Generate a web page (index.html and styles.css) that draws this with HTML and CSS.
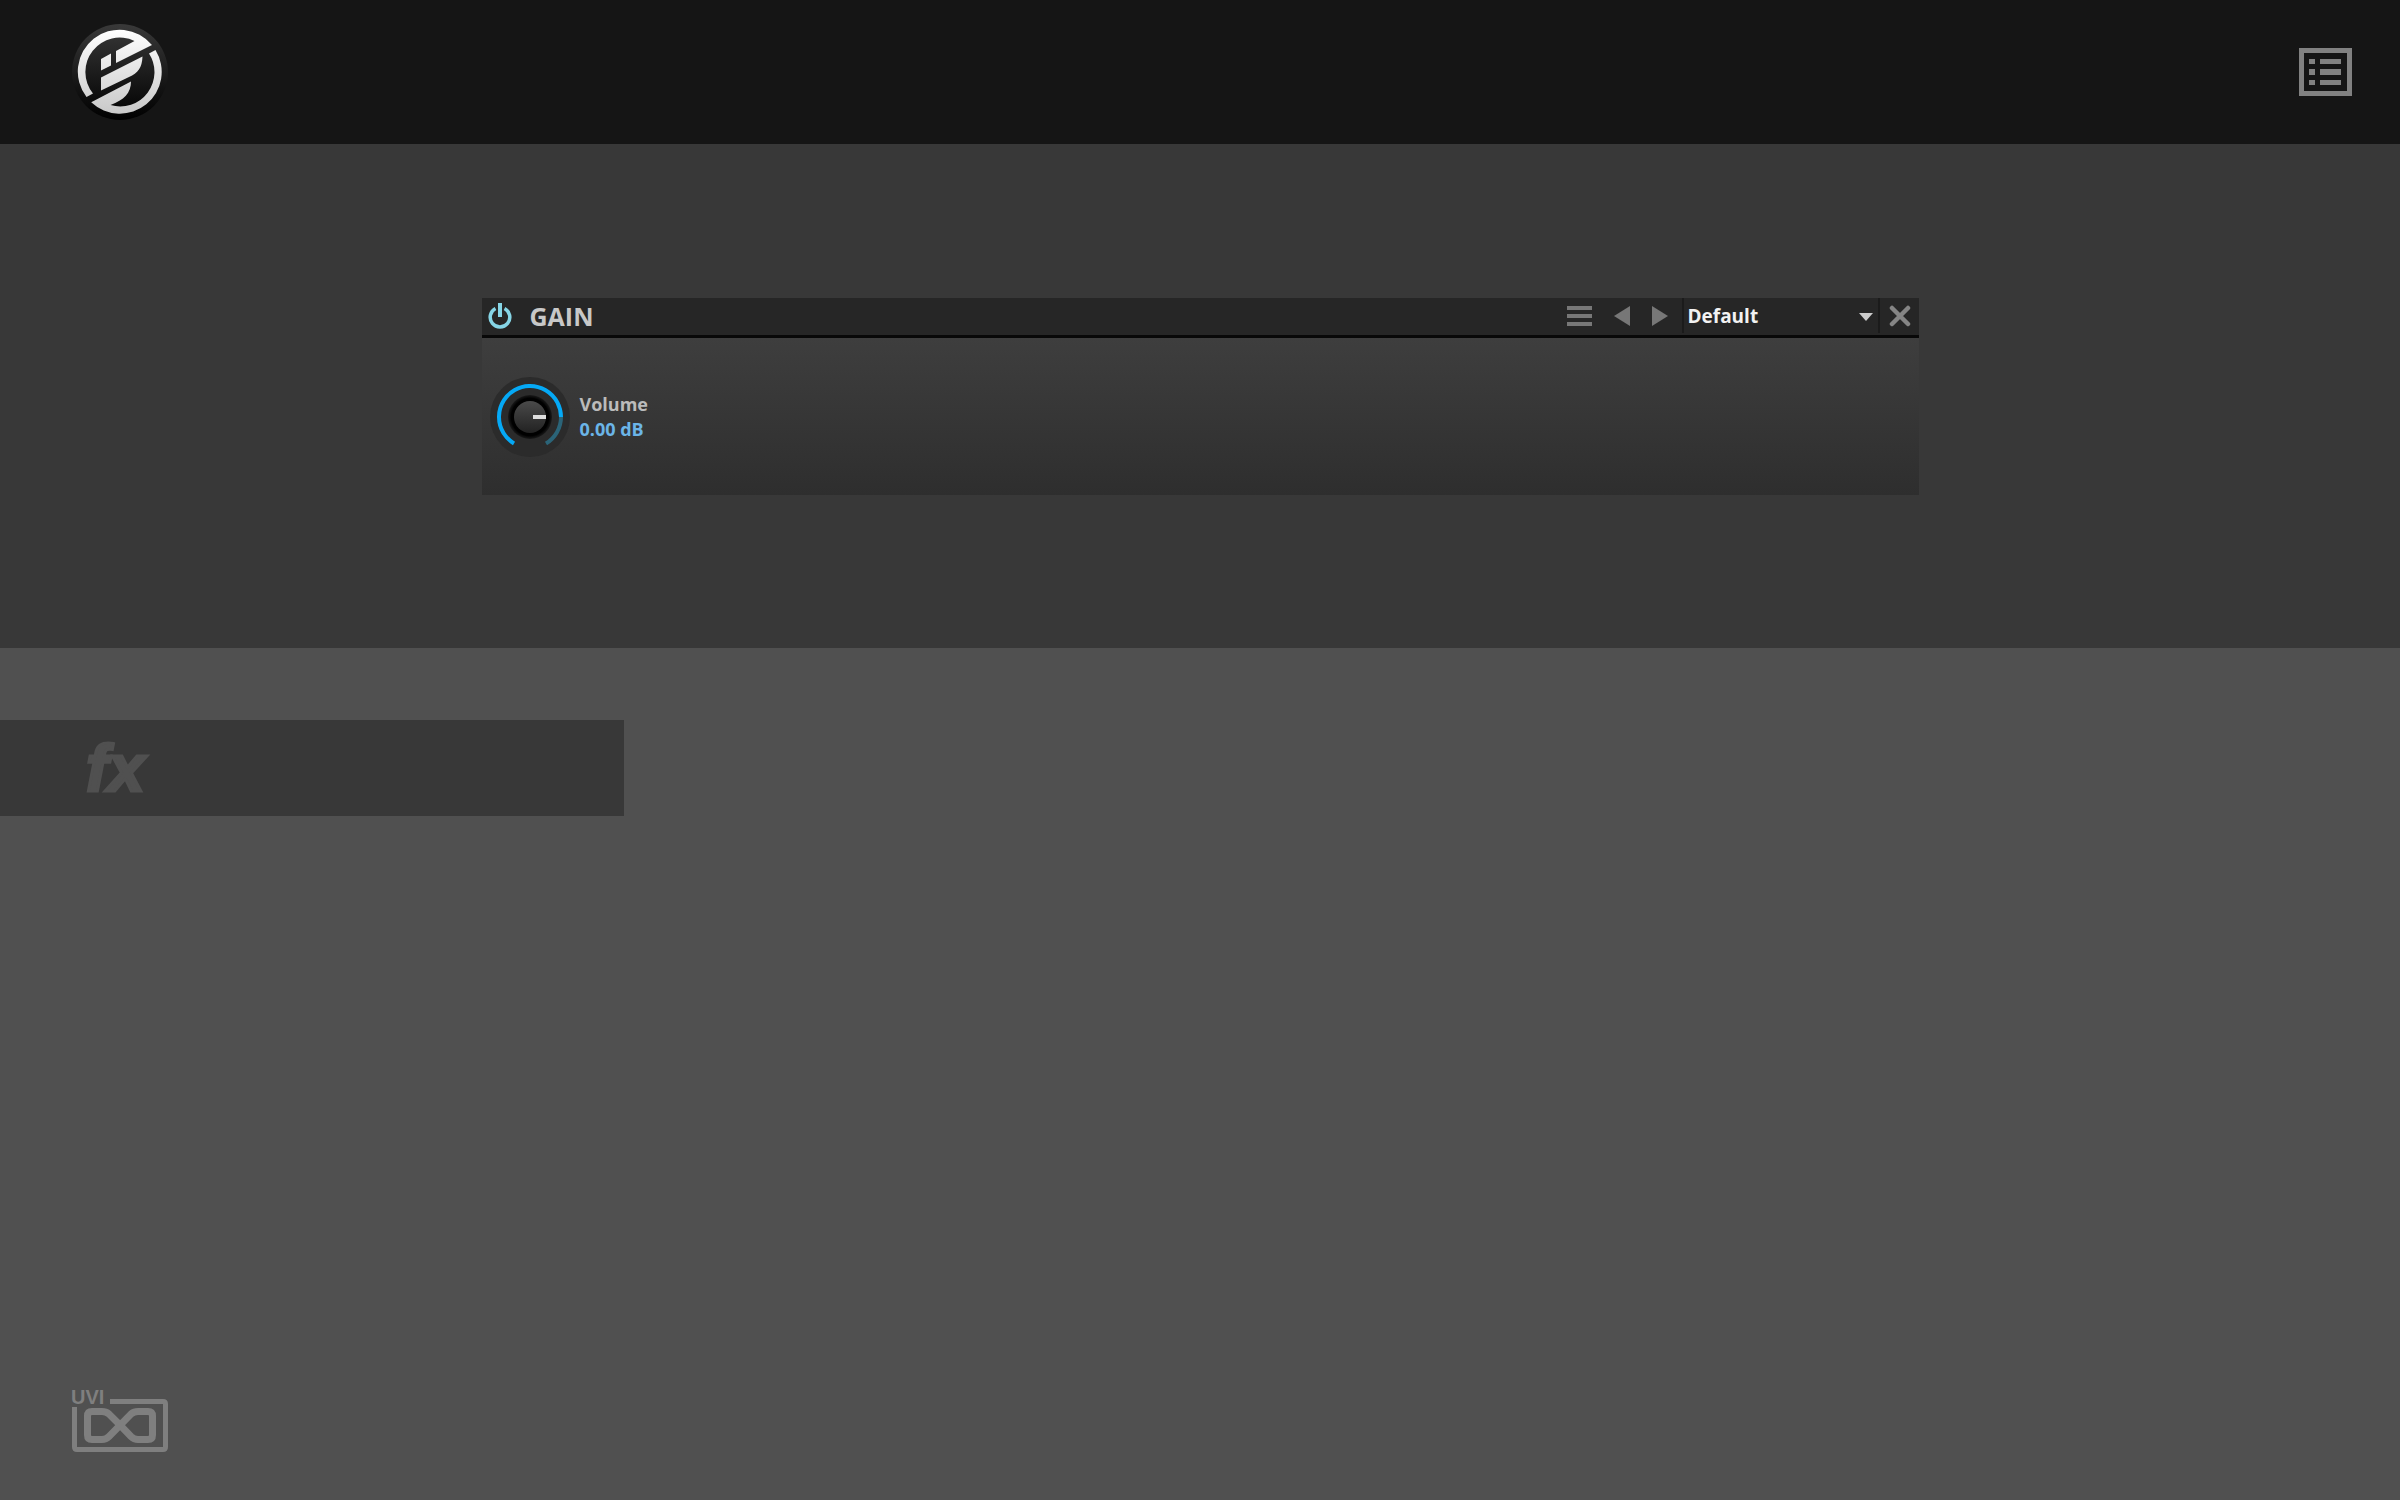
FILE: index.html
```html
<!DOCTYPE html>
<html lang="en">
<head>
	<meta charset="UTF-8">
	<title>Gain</title>
	<link rel="stylesheet" href="styles.css">
</head>
<body>
	<header class="topbar">
		<a href="#" class="logo" aria-label="Falcon">
			<svg width="96" height="96" viewBox="0 0 96 96">
				<defs>
					<linearGradient id="disc" x1="0" y1="0" x2="0" y2="1">
						<stop offset="0" stop-color="#393939"/>
						<stop offset="1" stop-color="#000"/>
					</linearGradient>
					<linearGradient id="mark" gradientUnits="userSpaceOnUse" x1="0" y1="6" x2="0" y2="90">
						<stop offset="0" stop-color="#fff"/>
						<stop offset="1" stop-color="#c8c8c8"/>
					</linearGradient>
				</defs>
				<circle cx="48" cy="48" r="48" fill="url(#disc)"/>
				<g fill="url(#mark)">
					<path d="M14.500 73 A41.820 41.820 0 0 1 80 21 L44 39 V27 L62.500 17 A34.300 34.300 0 0 0 21 69.500 Z"/>
					<path d="M83.500 26 A41.800 41.800 0 0 1 19.200 78.300 L59 57.500 C59 69 52 76 38.500 81 A34.300 34.300 0 0 0 77 29.500 Z"/>
					<path d="M29 35 L39 29.500 V41.500 L29 46.500 Z"/>
					<path d="M29 53.500 L70.500 32.500 C70 44 66 49 57 53 L29 66.500 Z"/>
				</g>
			</svg>
		</a>
		<button class="menu" aria-label="Contents">
			<svg width="53" height="48" viewBox="0 0 53 48" fill="#818181">
				<path fill-rule="evenodd" d="M0 0H53V48H0Z M5 5V43H48V5Z"/>
				<path d="M10 11h6v5h-6z M21 11h21v5h-21z M10 21h6v6h-6z M21 21h21v6h-21z M10 32h6v5h-6z M21 32h21v5h-21z"/>
			</svg>
		</button>
	</header>

	<section class="stage">
		<div class="module">
			<div class="module-head">
				<button class="power" aria-label="Power">
					<svg width="24" height="26" viewBox="0 0 24 26" fill="none" stroke="#86d5e6">
						<path d="M7.500 5.500 A9.800 9.800 0 1 0 16.500 5.500" stroke-width="3.500"/>
						<path d="M12 0V14" stroke-width="4"/>
					</svg>
				</button>
				<h1>GAIN</h1>
				<div class="tools">
					<button aria-label="Menu">
						<svg width="25" height="22" viewBox="0 0 25 22" fill="#777"><path d="M0 1h25v4h-25z M0 9h25v4h-25z M0 17h25v4h-25z"/></svg>
					</button>
					<button aria-label="Previous preset">
						<svg width="16" height="20" viewBox="0 0 16 20" fill="#777"><path d="M16 0V20L0 10Z"/></svg>
					</button>
					<button aria-label="Next preset">
						<svg width="16" height="20" viewBox="0 0 16 20" fill="#777"><path d="M0 0V20L16 10Z"/></svg>
					</button>
				</div>
				<div class="preset">
					<select aria-label="Preset">
						<option>Default</option>
					</select>
					<svg class="caret" width="14" height="8" viewBox="0 0 14 8" fill="#ccc"><path d="M0 0H14L7 8Z"/></svg>
				</div>
				<button class="close" aria-label="Close">
					<svg width="22" height="22" viewBox="0 0 22 22" stroke="#858585" stroke-width="4.500" stroke-linecap="round"><path d="M3 3L19 19M19 3L3 19"/></svg>
				</button>
			</div>
			<div class="module-body">
				<div class="knob">
					<svg width="80" height="80" viewBox="0 0 80 80">
						<defs>
							<linearGradient id="cap" x1="0" y1="0" x2="0" y2="1">
								<stop offset="0" stop-color="#4a4a4a"/>
								<stop offset="1" stop-color="#222"/>
							</linearGradient>
							<radialGradient id="shade">
								<stop offset="0.850" stop-color="#000"/>
								<stop offset="1" stop-color="#1a1a1a"/>
							</radialGradient>
						</defs>
						<circle cx="40" cy="40" r="40" fill="#2b2b2b"/>
						<path d="M71 40 A31 31 0 0 1 56 66.500" fill="none" stroke="#2b6478" stroke-width="4"/>
						<path d="M24 66.500 A31 31 0 1 1 71 40" fill="none" stroke="#05a9f6" stroke-width="4"/>
						<circle cx="40" cy="40" r="22" fill="url(#shade)"/>
						<circle cx="40" cy="40" r="16" fill="url(#cap)"/>
						<path d="M43 40H56" stroke="#ddd" stroke-width="4"/>
					</svg>
					<input type="range" id="volume" min="-60" max="12" value="0">
				</div>
				<div class="readout">
					<label for="volume">Volume</label>
					<output for="volume">0.00 dB</output>
				</div>
			</div>
		</div>
	</section>

	<main>
		<button class="fx">fx</button>
	</main>

	<footer>
		<a href="#" aria-label="UVI">
			<svg class="uvi" width="96" height="62" viewBox="0 0 96 62">
				<text x="-1" y="14">UVI</text>
				<g fill="none" stroke="#7f7f7f">
					<path d="M38 11.500H91Q93.500 11.500 93.500 14V57Q93.500 59.500 91 59.500H5Q2.500 59.500 2.500 57V17" stroke-width="5"/>
					<path d="M48 35 L37 24 Q34 21.500 30 21.500 H20 Q15.500 21.500 15.500 26 V45 Q15.500 49.500 20 49.500 H30 Q34 49.500 37 46.500 L59 24 Q62 21.500 66 21.500 H76 Q80.500 21.500 80.500 26 V45 Q80.500 49.500 76 49.500 H66 Q62 49.500 59 46.500 Z" stroke-width="7"/>
				</g>
			</svg>
		</a>
	</footer>
</body>
</html>
```
FILE: styles.css
```css
*{
	box-sizing:border-box;
}
body{
	display:flex;
	flex-direction:column;
	min-height:100vh;
	margin:0;
	background:#505050;
	font-family:"Open Sans",sans-serif;
}
button{
	padding:0;
	border:0;
	background:none;
	cursor:pointer;
}
svg{
	display:block;
}
.topbar{
	display:flex;
	align-items:center;
	justify-content:space-between;
	height:144px;
	padding:0 48px 0 72px;
	background:#151515;
}
.stage{
	display:flex;
	justify-content:center;
	padding:154px 0 153px;
	background:#383838;
}
.module{
	width:60%;
	max-width:1437px;
}
.module-head{
	display:flex;
	align-items:center;
	height:40px;
	padding-bottom:2px;
	border-bottom:3px solid #080808;
	background:#262626;
}
.power{
	margin:0 18px 0 6px;
}
.module-head h1{
	margin:0;
	color:#c8c8c8;
	font-size:25px;
	line-height:34px;
}
.tools{
	display:flex;
	align-items:center;
	gap:22px;
	margin:0 14px 0 auto;
}
.preset{
	position:relative;
	width:198px;
	height:100%;
	border:solid #1b1b1b;
	border-width:0 2px;
}
.preset select{
	width:100%;
	height:100%;
	padding:0 4px;
	border:0;
	appearance:none;
	background:#262626;
	color:#f2f2f2;
	font:bold 19px "Open Sans",sans-serif;
}
.caret{
	position:absolute;
	top:15px;
	right:5px;
	pointer-events:none;
}
.close{
	margin:0 8px 0 9px;
}
.module-body{
	display:flex;
	align-items:center;
	gap:10px;
	height:157px;
	padding:0 8px;
	background:linear-gradient(#3e3e3e,#2e2e2e);
}
.knob{
	position:relative;
}
.knob input{
	position:absolute;
	top:0;
	left:0;
	width:100%;
	height:100%;
	margin:0;
	opacity:0;
}
.readout{
	display:flex;
	flex-direction:column;
	color:#bbb;
	font-weight:bold;
	font-size:18px;
	line-height:25px;
}
.readout output{
	color:#6bb5e8;
}
main{
	flex:1;
	padding-top:72px;
}
.fx{
	display:block;
	width:26%;
	height:96px;
	padding-left:86px;
	background:#383838;
	color:#505050;
	font:italic bold 66px "Liberation Sans",sans-serif;
	text-align:left;
	-webkit-text-stroke:3px #505050;
}
footer{
	display:flex;
	padding:0 72px 48px;
}
.uvi{
	overflow:visible;
	fill:#7f7f7f;
	font:bold 20px "Liberation Sans",sans-serif;
}
```
